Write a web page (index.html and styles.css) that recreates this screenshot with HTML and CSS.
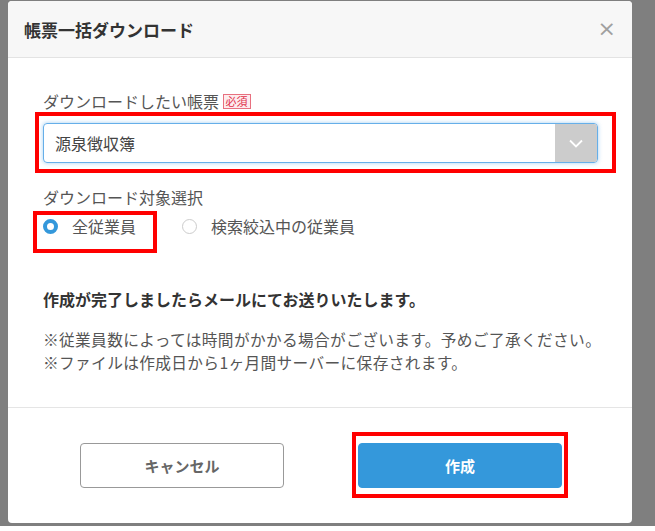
FILE: index.html
```html
<!DOCTYPE html>
<html>
<head>
  <title>帳票一括ダウンロード</title>
  <link rel="stylesheet" href="styles.css">
</head>
<body>
  <div class="backdrop">
    <div class="modal">
      <div class="modal-header">
        <h2 class="modal-title">帳票一括ダウンロード</h2>
        <span class="close">&times;</span>
      </div>
      <div class="modal-body">
        <div class="label">ダウンロードしたい帳票 <span class="required">必須</span></div>
        <div class="select">
          <span class="select-value">源泉徴収簿</span>
          <span class="select-arrow">
            <svg width="14" height="9" viewBox="0 0 14 9"><path d="M1 1.5 L7 7.5 L13 1.5" fill="none" stroke="#fff" stroke-width="1.8"/></svg>
          </span>
        </div>
        <div class="label label-second">ダウンロード対象選択</div>
        <div class="radios">
          <label class="radio"><span class="radio-dot checked"></span>全従業員</label>
          <label class="radio"><span class="radio-dot"></span>検索絞込中の従業員</label>
        </div>
        <p class="notice">作成が完了しましたらメールにてお送りいたします。</p>
        <p class="notes">※従業員数によっては時間がかかる場合がございます。予めご了承ください。<br>※ファイルは作成日から1ヶ月間サーバーに保存されます。</p>
      </div>
      <div class="modal-footer">
        <button class="btn btn-cancel">キャンセル</button>
        <button class="btn btn-primary">作成</button>
      </div>
      <div class="mark mark-select"></div>
      <div class="mark mark-radio"></div>
      <div class="mark mark-button"></div>
    </div>
  </div>
</body>
</html>
```

FILE: styles.css
```css
body {
  margin: 0;
  background: #fff;
  font-family: "Noto Sans CJK JP", "Noto Sans", sans-serif;
  color: #333;
}
.backdrop {
  height: 522px;
  padding: 1px 23px 3px 8px;
  background: #7f7f7f;
}
.modal {
  position: relative;
  width: 624px;
  height: 522px;
  background: #fff;
  border-radius: 4px;
  display: flex;
  flex-direction: column;
}
.modal-header {
  height: 56px;
  display: flex;
  align-items: center;
  justify-content: space-between;
  padding: 0 16px;
  background: #f7f7f7;
  border-bottom: 1px solid #e3e3e3;
  border-radius: 4px 4px 0 0;
}
.modal-title {
  margin: 0;
  font-size: 17px;
  font-weight: bold;
  color: #333;
}
.close {
  font-family: "DejaVu Sans", sans-serif;
  font-size: 22px;
  color: #a0a0a0;
  line-height: 1;
}
.modal-body {
  height: 317px;
  padding: 32px 34px 0 35px;
  border-bottom: 1px solid #e5e5e5;
}
.label {
  font-size: 16px;
  line-height: 22px;
  color: #555;
}
.label-second {
  margin-top: 23px;
}
.required {
  display: inline-block;
  font-size: 11px;
  line-height: 13px;
  padding: 0 2px;
  color: #e0324b;
  background: #fdecee;
  border: 1px solid #e8707f;
  vertical-align: 2px;
}
.select {
  margin-top: 11px;
  height: 38px;
  display: flex;
  border: 1px solid #66afe9;
  border-radius: 4px;
  box-shadow: 0 0 4px rgba(102, 175, 233, 0.6);
  overflow: hidden;
}
.select-value {
  flex: 1;
  padding-left: 11px;
  font-size: 16px;
  line-height: 38px;
  color: #444;
}
.select-arrow {
  width: 42px;
  background: #ccc;
  display: flex;
  align-items: center;
  justify-content: center;
}
.radios {
  display: flex;
  gap: 46px;
  margin-top: 7px;
}
.radio {
  display: flex;
  align-items: center;
  gap: 14px;
  font-size: 16px;
  line-height: 22px;
  color: #555;
}
.radio-dot {
  width: 15px;
  height: 15px;
  box-sizing: border-box;
  border: 1px solid #ccc;
  border-radius: 50%;
  background: #fff;
}
.radio-dot.checked {
  border: 4px solid #3498db;
}
.notice {
  margin: 51px 0 0;
  font-size: 16px;
  font-weight: bold;
  line-height: 22px;
  color: #333;
}
.notes {
  margin: 18px 0 0;
  font-size: 15.7px;
  line-height: 23px;
  letter-spacing: 0.35px;
  color: #555;
  white-space: nowrap;
}
.modal-footer {
  flex: 1;
  display: flex;
  justify-content: center;
  align-items: flex-start;
  gap: 74px;
  padding-top: 35px;
  padding-left: 2px;
}
.btn {
  width: 204px;
  height: 45px;
  border-radius: 4px;
  font-family: inherit;
  font-size: 15px;
  font-weight: bold;
}
.btn-cancel {
  background: #fff;
  border: 1px solid #999;
  color: #666;
}
.btn-primary {
  background: #3498db;
  border: 1px solid #3498db;
  color: #fff;
}
.mark {
  position: absolute;
  border: 4px solid #f00;
  box-sizing: border-box;
}
.mark-select {
  left: 27px;
  top: 111px;
  width: 581px;
  height: 61px;
}
.mark-radio {
  left: 25px;
  top: 210px;
  width: 124px;
  height: 42px;
}
.mark-button {
  left: 344px;
  top: 431px;
  width: 216px;
  height: 66px;
}
```
